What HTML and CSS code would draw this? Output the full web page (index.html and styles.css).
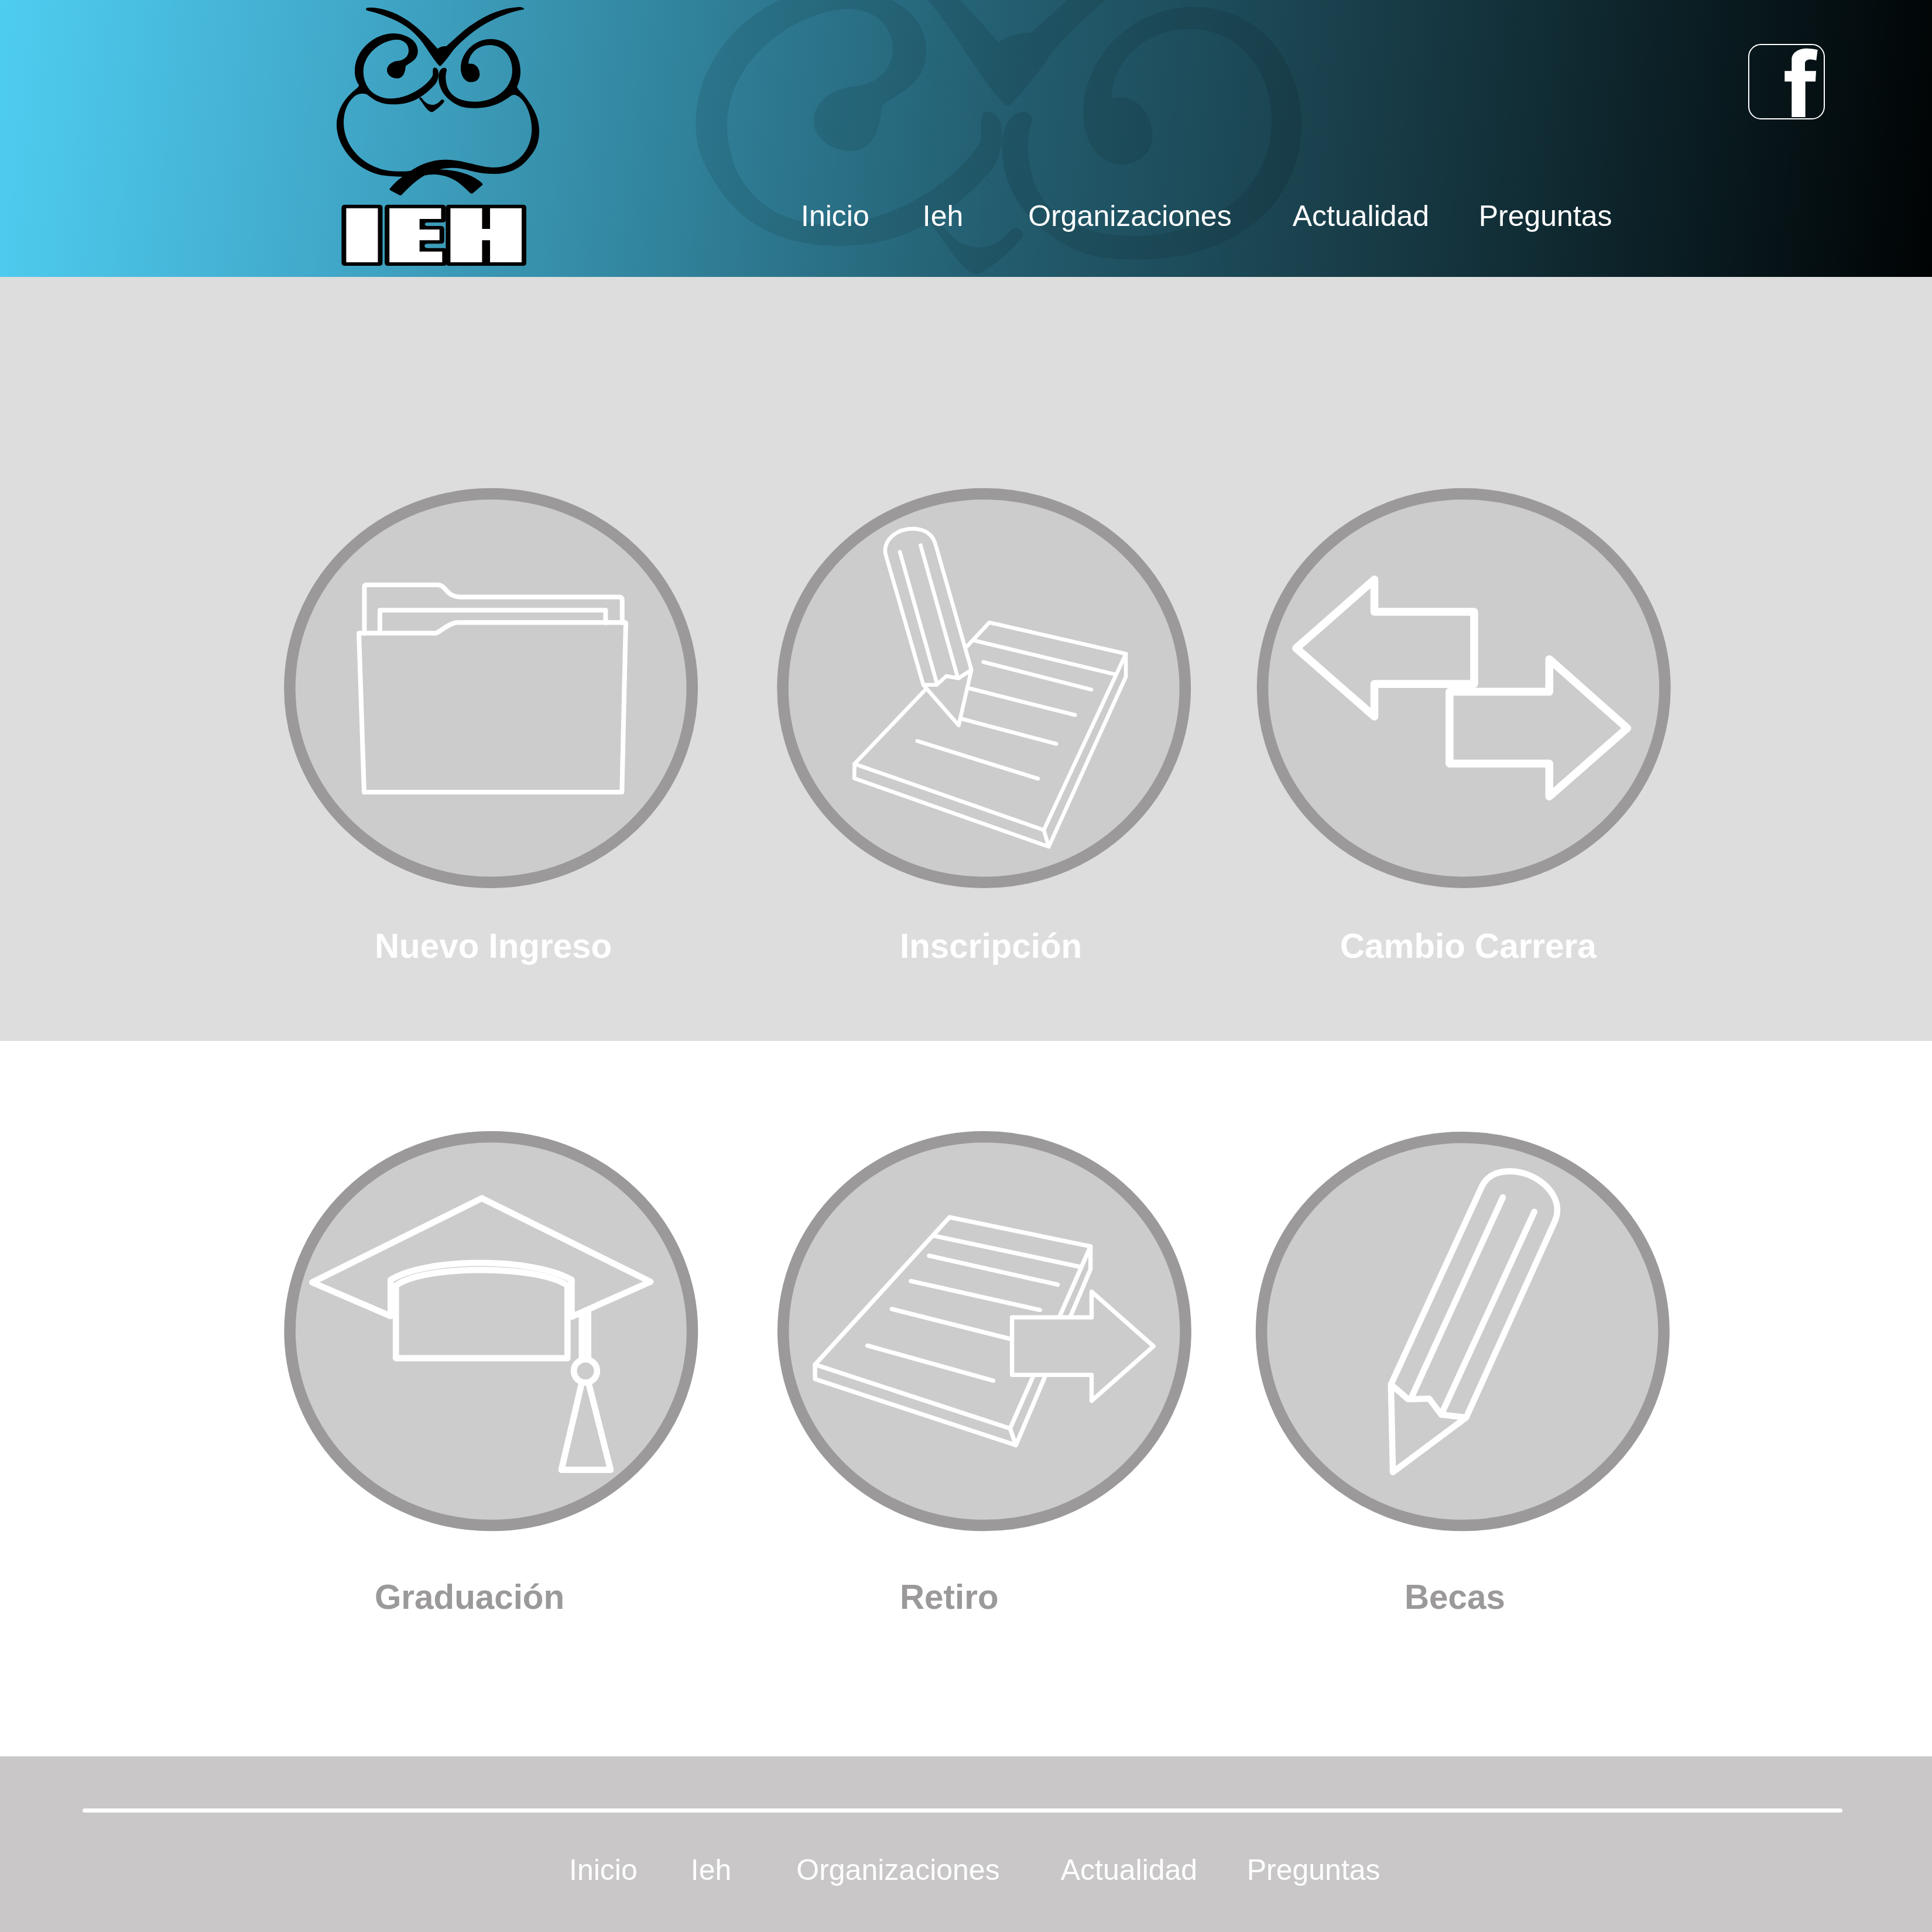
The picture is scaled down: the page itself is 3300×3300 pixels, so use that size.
FILE: index.html
```html
<!DOCTYPE html>
<html lang="es">
<head>
<meta charset="utf-8">
<title>IEH</title>
<link rel="stylesheet" href="styles.css">
</head>
<body>
<header class="header">
  <svg class="watermark" viewBox="0 0 1260 1440" aria-hidden="true">
    <path d="M258,42C262,38 280,38 300,40C430,55 530,140 622,250C635,240 650,236 668,236C720,190 760,150 800,125C880,70 960,40 1040,36L1066,47C900,88 790,160 700,260C680,290 660,315 640,336Q635,341 629,335C600,305 570,250 535,205C480,135 400,95 300,64L257,52Z"/>
    <path d="M220,438C205,415 197,390 198,360C200,255 300,170 400,171C450,173 521,200 521,262C521,310 480,320 458,340C458,365 448,400 418,402C390,403 363,385 363,360C363,330 395,312 425,311C455,306 474,285 474,260C474,225 448,203 412,203C350,203 243,265 242,365C242,440 290,506 390,505C490,500 575,430 597,388C600,375 594,350 604,347C615,345 627,355 627,375C627,400 622,420 605,437C560,485 500,534 400,535C310,535 255,500 220,438Z"/>
    <path d="M820,554C760,555 735,545 710,530C660,500 627,455 627,395C627,365 640,347 658,347C668,349 671,355 668,365C660,390 664,420 672,445C690,495 740,521 815,521C910,521 1005,460 1005,360C1005,290 960,231 890,231C820,231 780,285 781,328C810,320 838,345 838,380C838,405 820,420 795,421C760,421 741,385 741,350C741,270 810,200 895,200C990,200 1047,280 1047,365C1047,470 960,553 820,554Z"/>
    <path d="M528,503C532,498 540,498 543,505C560,528 575,537 595,537C615,537 630,525 640,512C648,507 656,512 657,520C650,533 620,560 600,572Q591,577 582,571C560,555 545,525 528,506Z"/>
  </svg>
  <a class="logo" href="#">
    <svg viewBox="0 0 1260 1419">
      <defs>
        <filter id="wide" x="-120%" y="-20%" width="340%" height="140%" color-interpolation-filters="sRGB">
          <feMorphology in="SourceGraphic" operator="dilate" radius="46.6 7" result="face"/>
          <feMorphology in="face" operator="dilate" radius="24 17" result="grown"/>
          <feGaussianBlur in="grown" stdDeviation="8" result="soft"/>
          <feColorMatrix in="soft" values="0 0 0 0 .01  0 0 0 0 0  0 0 0 0 0  0 0 0 9 -4" result="edge"/>
          <feMerge><feMergeNode in="edge"/><feMergeNode in="face"/></feMerge>
        </filter>
        <filter id="wider" x="-80%" y="-20%" width="260%" height="140%" color-interpolation-filters="sRGB">
          <feMorphology in="SourceGraphic" operator="dilate" radius="58 7" result="face"/>
          <feMorphology in="face" operator="dilate" radius="24 17" result="grown"/>
          <feGaussianBlur in="grown" stdDeviation="8" result="soft"/>
          <feColorMatrix in="soft" values="0 0 0 0 .01  0 0 0 0 0  0 0 0 0 0  0 0 0 9 -4" result="edge"/>
          <feMerge><feMergeNode in="edge"/><feMergeNode in="face"/></feMerge>
        </filter>
      </defs>
      <path d="M258,42C262,38 280,38 300,40C430,55 530,140 622,250C635,240 650,236 668,236C720,190 760,150 800,125C880,70 960,40 1040,36C1055,36 1066,42 1066,47C1060,50 1050,50 1035,54C900,88 790,160 700,260C680,290 660,315 640,336Q635,341 629,335C600,305 570,250 535,205C480,135 400,95 300,64C280,59 262,55 257,52C255,48 255,45 258,42Z"/>
      <path d="M220,438C205,415 197,390 198,360C200,255 300,170 400,171C450,173 521,200 521,262C521,310 480,320 458,340C458,365 448,400 418,402C390,403 363,385 363,360C363,330 395,312 425,311C455,306 474,285 474,260C474,225 448,203 412,203C350,203 243,265 242,365C242,440 290,506 390,505C490,500 575,430 597,388C600,375 594,350 604,347C615,345 627,355 627,375C627,400 622,420 605,437C560,485 500,534 400,535C330,535 300,515 262,485C240,475 210,482 195,495C155,530 141,580 141,630C143,770 270,880 420,878C450,878 470,878 485,875C530,845 590,818 660,818C760,818 830,858 915,858C1040,855 1105,760 1105,660C1105,590 1070,500 1018,486C1000,483 990,500 970,510C930,537 880,553 820,554C760,555 735,545 710,530C660,500 627,455 627,395C627,365 640,347 658,347C668,349 671,355 668,365C660,390 664,420 672,445C690,495 740,521 815,521C910,521 1005,460 1005,360C1005,290 960,231 890,231C820,231 780,285 781,328C810,320 838,345 838,380C838,405 820,420 795,421C760,421 741,385 741,350C741,270 810,200 895,200C990,200 1047,280 1047,365C1047,400 1038,425 1029,445C1035,462 1055,475 1065,488C1110,545 1143,600 1143,670C1143,740 1120,775 1085,815C1045,865 985,891 915,891C870,891 830,885 790,875C730,858 690,856 632,868C730,872 800,895 850,938Q855,944 852,948L803,990Q797,995 790,990C730,930 690,900 610,894Q580,893 555,899C510,925 470,965 440,997Q433,1004 425,999L380,975Q374,972 378,966C400,940 420,920 443,906C400,904 370,903 335,898C200,870 105,750 105,640C106,560 150,500 200,460C208,453 216,447 220,438Z"/>
      <path d="M528,503C532,498 540,498 543,505C560,528 575,537 595,537C615,537 630,525 640,512C648,507 656,512 657,520C650,533 620,560 600,572Q591,577 582,571C560,555 545,525 528,506Z"/>
      <g class="logo-text">
        <g filter="url(#wide)"><text transform="translate(172 1339) scale(1.19 1)">I</text></g>
        <g filter="url(#wider)"><text transform="translate(414 1339) scale(.725 1)">E</text></g>
        <g filter="url(#wide)"><text transform="translate(706 1339) scale(1.19 1)">H</text></g>
      </g>
    </svg>
  </a>
  <nav class="nav nav-top">
    <a href="#">Inicio</a><a href="#">Ieh</a><a href="#">Organizaciones</a><a href="#">Actualidad</a><a href="#">Preguntas</a>
  </nav>
  <a class="social" href="#" aria-label="Facebook">
    <svg viewBox="139 75 391 387"><path d="M361,450V268H325V214H361V155C361,120 395,98 440,98Q470,99 494,105L487,160C460,152 429,150 429,178V214H486L483,268H431V450Z"/></svg>
  </a>
</header>
<main>
  <section class="row row-first">
    <a class="card" href="#">
      <svg class="icon folder" viewBox="15 14 707 683">
        <ellipse cx="368.6" cy="355.4" rx="343.7" ry="331.8"/>
        <g transform="scale(.47194 .53571)">
          <path d="M323,488V340Q323,334 331,334H588C620,334 615,373 675,373H1247Q1256,374 1256,382V455"/>
          <path d="M379,488V415H1196V455"/>
          <path d="M303,488H582C600,482 630,455 660,454H1266Q1270,455 1269,460L1255,995H322Z"/>
        </g>
      </svg>
      <h2>Nuevo Ingreso</h2>
    </a>
    <a class="card" href="#">
      <svg class="icon notepad" viewBox="17 14 707 683">
        <ellipse cx="370.7" cy="355.4" rx="343.7" ry="331.8"/>
        <g transform="scale(.47194 .53571)">
          <path d="M722,532L805,454L1299,554L1002,1116L317,905L575,667"/>
          <path d="M317,905L316,951L1020,1169L1299,627V554M1002,1116L1020,1169M748,511L1262,620"/>
          <path d="M783,580L1174,668M733,664L1115,749M708,762L1047,841M544,832L981,952"/>
          <path d="M566,653L429,235C420,190 470,155 530,155C580,157 603,180 611,208L740,605L694,782L566,653L614,653L649,625L694,632L740,605"/>
          <path d="M481,229L614,645M556,208L690,628"/>
        </g>
      </svg>
      <h2>Inscripción</h2>
    </a>
    <a class="card" href="#">
      <svg class="icon arrows" viewBox="17 14 707 683">
        <ellipse cx="370.2" cy="355.4" rx="343.7" ry="331.8"/>
        <g transform="scale(.47194 .53571)">
          <path d="M461,317L178,536L461,754V650H822V420H461Z"/>
          <path d="M733,675H1094V571L1376,791L1094,1009V904H733Z"/>
        </g>
      </svg>
      <h2>Cambio Carrera</h2>
    </a>
  </section>
  <section class="row row-second">
    <a class="card" href="#">
      <svg class="icon cap" viewBox="15 12 707 683">
        <ellipse cx="368.8" cy="353.7" rx="343.7" ry="331.9"/>
        <g transform="scale(.47194 .54845)">
          <path d="M418,598L134,493L748,231L1358,491L1073,600V485C930,415 550,415 418,485Z"/>
          <path d="M437,729V503C540,438 950,438 1058,503V729Z"/>
          <path d="M1110,592V732M1133,582V732"/>
          <ellipse class="line" cx="1123" cy="769" rx="42" ry="36"/>
          <path d="M1108,812L1036,1077H1214L1136,812"/>
        </g>
      </svg>
      <h2>Graduación</h2>
    </a>
    <a class="card" href="#">
      <svg class="icon leave" viewBox="18 12 707 683">
        <ellipse cx="371.4" cy="353.7" rx="343.7" ry="331.9"/>
        <g transform="scale(.47194 .54845)">
          <path d="M661,290L1171,381L880,948L174,749Z"/>
          <path d="M174,749V794L901,1000L1171,452V381M880,948L901,1000M605,348L1136,445"/>
          <path d="M587,410L1052,500M521,489L988,579M452,576L880,669M364,690L819,799"/>
          <path class="solid" d="M887,602H1175V522L1399,692L1175,862V781H887Z"/>
        </g>
      </svg>
      <h2>Retiro</h2>
    </a>
    <a class="card" href="#">
      <svg class="icon pencil" viewBox="15 12 707 683">
        <ellipse cx="368.3" cy="354.2" rx="343.7" ry="331.4"/>
        <g transform="scale(.47194 .54845)">
          <path d="M521,811L849,196C865,165 900,147 950,147C1040,147 1123,205 1123,268Q1123,285 1113,305L793,914L528,1084L521,811L583,857L659,855L703,905L793,914"/>
          <path d="M926,228L593,855M1040,273L707,897"/>
        </g>
      </svg>
      <h2>Becas</h2>
    </a>
  </section>
</main>
<footer class="footer">
  <div class="rule"></div>
  <nav class="nav nav-bottom">
    <a href="#">Inicio</a><a href="#">Ieh</a><a href="#">Organizaciones</a><a href="#">Actualidad</a><a href="#">Preguntas</a>
  </nav>
</footer>
</body>
</html>
```
FILE: styles.css
```css
* { box-sizing: border-box; }
body {
  margin: 0;
  width: 3300px;
  background: #fff;
  font-family: "Liberation Sans", Arial, sans-serif;
}
a { color: inherit; text-decoration: none; }
svg { display: block; }

.header {
  position: relative;
  display: flex;
  align-items: flex-start;
  height: 473px;
  overflow: hidden;
  background: linear-gradient(96deg, #4ecdf1 0%, #41a8c9 18%, #31839c 35%, #235d6f 52%, #183c47 71%, #0a1d22 87%, #050f12 94%, #000304 100%);
}
.watermark {
  position: absolute;
  left: 947px;
  top: -232px;
  width: 1536px;
  height: 1755px;
  opacity: .085;
}
.logo { position: relative; margin-left: 540px; }
.logo svg { width: 420px; height: 473px; }
.logo-text {
  fill: #fff;
  font-size: 384px;
  font-weight: 700;
}

.nav {
  display: flex;
  color: #fff;
  font-size: 50px;
  line-height: 58px;
  white-space: nowrap;
}
.nav a:nth-child(1) { margin-right: 91px; }
.nav a:nth-child(2) { margin-right: 111px; }
.nav a:nth-child(3) { margin-right: 104px; }
.nav a:nth-child(4) { margin-right: 84.5px; }
.nav-top { position: relative; margin: 340px 0 0 408px; }

.social {
  width: 131px;
  height: 129px;
  margin: 75px 183px 0 auto;
  border: 2px solid #fff;
  border-radius: 22px;
}
.social svg { width: 131px; height: 129px; margin: -2px; fill: #fff; }

.row { display: flex; align-items: flex-start; }
.row-first { height: 1305px; padding: 361px 0 0 485px; background: #ddd; color: #fff; }
.row-second { height: 1222px; padding: 154px 0 0 485px; background: #fff; color: #9b999a; }
.card { width: 707px; }
.card h2 {
  margin: 65px 0 0;
  font-size: 58.33px;
  font-weight: 700;
  line-height: 67px;
}
.row-first .card:nth-child(2) { margin-left: 135px; }
.row-first .card:nth-child(3) { margin-left: 113px; }
.row-first .card:nth-child(1) h2 { padding-left: 155px; }
.row-first .card:nth-child(2) h2 { padding-left: 210px; }
.row-first .card:nth-child(3) h2 { padding-left: 142px; }
.row-second .card:nth-child(2) { margin-left: 136px; }
.row-second .card:nth-child(3) { margin-left: 110px; }
.row-second .card h2 { margin-top: 79px; }
.row-second .card:nth-child(1) h2 { padding-left: 155px; }
.row-second .card:nth-child(2) h2 { padding-left: 209px; }
.row-second .card:nth-child(3) h2 { padding-left: 254px; }

.icon { width: 707px; height: 683px; overflow: visible; }
.icon > ellipse { fill: #ccc; stroke: #9b999a; stroke-width: 19.5px; }
.icon path, .icon .line {
  fill: none;
  stroke: #fff;
  stroke-linecap: round;
  stroke-linejoin: round;
  vector-effect: non-scaling-stroke;
}
.icon .solid { fill: #ccc; }
.folder g { stroke-width: 8px; }
.notepad g { stroke-width: 6.6px; }
.arrows g { stroke-width: 13.5px; }
.cap g { stroke-width: 10.7px; }
.leave g { stroke-width: 7.4px; }
.pencil g { stroke-width: 10.6px; }

.footer { height: 300px; padding-top: 89px; background: #c9c7c8; }
.rule { width: 3006px; height: 7px; margin-left: 141px; border-radius: 4px; background: #fff; }
.nav-bottom { margin: 69px 0 0 972px; }
```
